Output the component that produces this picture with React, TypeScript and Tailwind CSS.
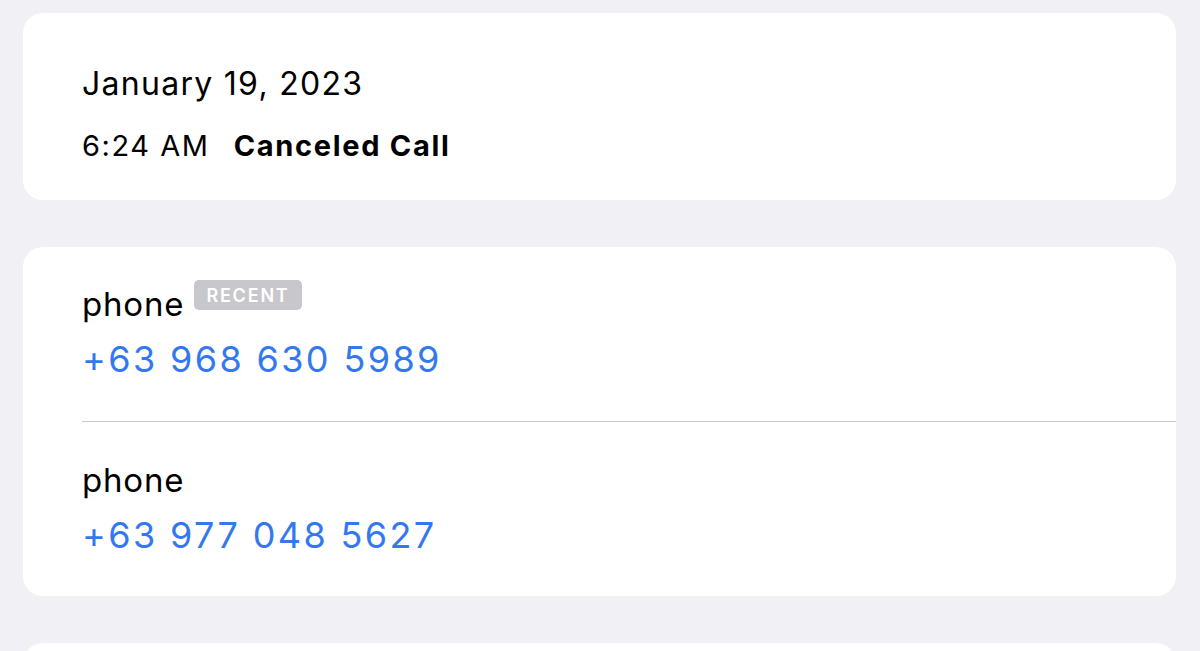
import React from 'react';

type PhoneEntry = { label: string; number: string; recent?: boolean };

const phones: PhoneEntry[] = [
  { label: 'phone', number: '+63 968 630 5989', recent: true },
  { label: 'phone', number: '+63 977 048 5627' },
];

const PhoneRow: React.FC<{ entry: PhoneEntry; first: boolean }> = ({ entry, first }) => (
  <div className={first ? 'pt-[37px] pb-[40px]' : 'pt-[38px] pb-[39px]'}>
    <div className="flex items-start gap-[10px] pl-[59px]">
      <span className="text-[33px] leading-[40px] tracking-[0.025em] text-black">{entry.label}</span>
      {entry.recent && (
        <span className="-mt-[4px] h-[30px] px-[12px] rounded-[5px] bg-[#c7c7cc] text-white text-[18px] font-semibold tracking-[0.1em] flex items-center">
          RECENT
        </span>
      )}
    </div>
    <div className="pl-[59px] mt-[13px] text-[36px] leading-[44px] tracking-[0.066em] text-[#3478f0]">
      {entry.number}
    </div>
  </div>
);

export default function App() {
  return (
    <div
      className="h-[651px] overflow-hidden bg-[#f0f0f5] pt-[13px] pl-[23px] pr-[24px] flex flex-col gap-[47px]"
      style={{ fontFamily: 'Inter, "Liberation Sans", sans-serif' }}
    >
      {/* call info */}
      <div className="bg-white rounded-[20px] h-[187px] pt-[51px] pl-[59px] shrink-0">
        <div className="text-[32px] leading-[40px] tracking-[0.04em] text-black">January 19, 2023</div>
        <div className="mt-[24px] flex items-baseline gap-[24px] text-[29px] leading-[36px] text-black">
          <span className="tracking-[0.054em]">6:24 AM</span>
          <span className="font-bold tracking-[0.058em]">Canceled Call</span>
        </div>
      </div>

      {/* numbers */}
      <div className="bg-white rounded-[20px] shrink-0">
        {phones.map((p, i) => (
          <React.Fragment key={p.number}>
            {i > 0 && <div className="ml-[59px] h-px bg-[#c8c8cc]" />}
            <PhoneRow entry={p} first={i === 0} />
          </React.Fragment>
        ))}
      </div>

      <div className="bg-white rounded-[20px] h-[120px] shrink-0" />
    </div>
  );
}
